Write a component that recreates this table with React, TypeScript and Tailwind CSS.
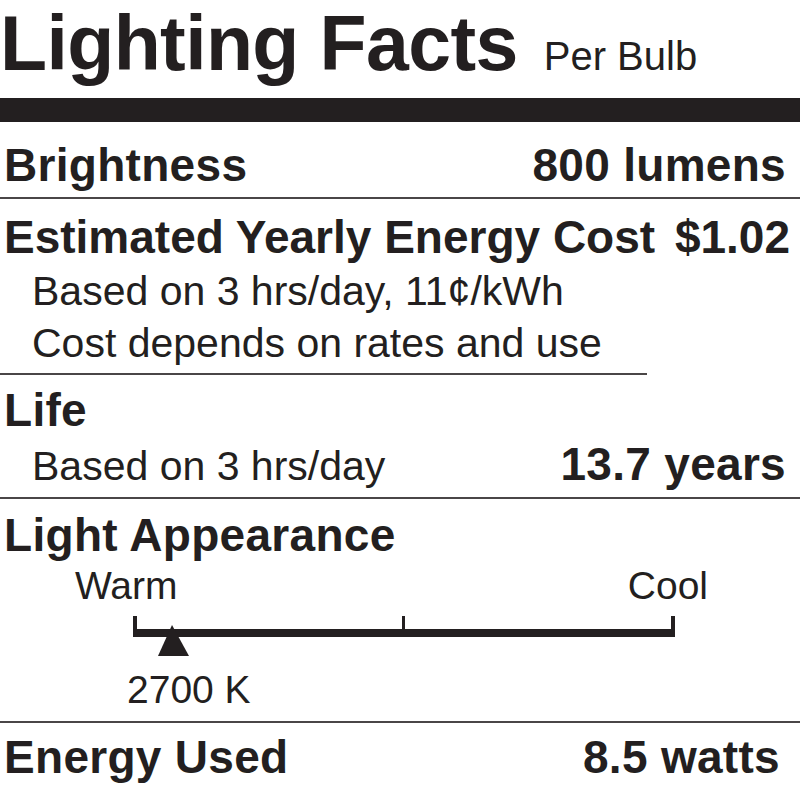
import React from 'react'

const ink = 'text-[#231f20]'

const Rule = ({ className = 'w-full' }: { className?: string }) => <div className={`h-[2px] bg-[#4a4647] ${className}`} />

const BoldRow = ({ left, right, className = '' }: { left: string; right?: string; className?: string }) => (
  <div className={`flex items-baseline justify-between pl-[4px] pr-[14px] h-[50px] ${className}`}>
    <span className="text-[46px] leading-[50px] font-bold tracking-[0.3px]">{left}</span>
    {right && <span className="text-[46px] leading-[50px] font-bold tracking-[0.3px]">{right}</span>}
  </div>
)

const SubLine = ({ children }: { children: React.ReactNode }) => (
  <div className="pl-[32px] text-[41px] leading-[52px] h-[52px]">{children}</div>
)

const Scale: React.FC = () => (
  <svg width="800" height="51" viewBox="0 0 800 51" className="block">
    <rect x="133" y="20" width="542" height="8" fill="#231f20" />
    <rect x="133" y="7" width="4" height="21" fill="#231f20" />
    <rect x="402" y="7" width="3" height="15" fill="#231f20" />
    <rect x="671" y="7" width="4" height="21" fill="#231f20" />
    <polygon points="172,16 158,47 189,47" fill="#231f20" />
  </svg>
)

export default function App() {
  return (
    <div className={`w-[800px] h-[800px] bg-white overflow-hidden ${ink}`} style={{ fontFamily: '"Liberation Sans", Arial, sans-serif' }}>
      {/* header */}
      <div className="h-[98px] pt-[3px] flex items-baseline">
        <h1 className="text-[77px] leading-[80px] font-bold tracking-[-0.6px]">Lighting Facts</h1>
        <span className="ml-[26px] text-[40px] leading-[80px]">Per Bulb</span>
      </div>
      <div className="h-[24px] bg-[#231f20]" />

      <BoldRow left="Brightness" right="800 lumens" className="mt-[18px]" />
      <Rule className="mt-[7px] w-full" />

      <div className="mt-[13px] flex items-baseline justify-between pl-[4px] pr-[10px] h-[50px]">
        <span className="text-[46px] leading-[50px] font-bold">Estimated Yearly Energy Cost</span>
        <span className="text-[46px] leading-[50px] font-bold">$1.02</span>
      </div>
      <div className="mt-[3px]">
        <SubLine>Based on 3 hrs/day, 11¢/kWh</SubLine>
        <SubLine>Cost depends on rates and use</SubLine>
      </div>
      <Rule className="mt-[4px] w-[647px]" />

      <BoldRow left="Life" className="mt-[10px]" />
      <div className="mt-[3px] flex items-baseline justify-between pr-[14px] h-[52px]">
        <span className="pl-[32px] text-[41px] leading-[52px]">Based on 3 hrs/day</span>
        <span className="text-[46px] leading-[52px] font-bold tracking-[0.3px]">13.7 years</span>
      </div>
      <Rule className="mt-[7px] w-full" />

      <BoldRow left="Light Appearance" className="mt-[11px]" />
      <div className="mt-[3px] flex justify-between pl-[75px] pr-[92px] h-[46px] text-[39px] leading-[46px]">
        <span>Warm</span>
        <span>Cool</span>
      </div>
      <Scale />
      <div className="mt-[7px] pl-[127px] h-[46px] text-[39px] leading-[46px]">2700 K</div>
      <Rule className="mt-[8px] w-full" />

      <BoldRow left="Energy Used" right="8.5 watts" className="mt-[9px] pr-[20px]" />
    </div>
  )
}
